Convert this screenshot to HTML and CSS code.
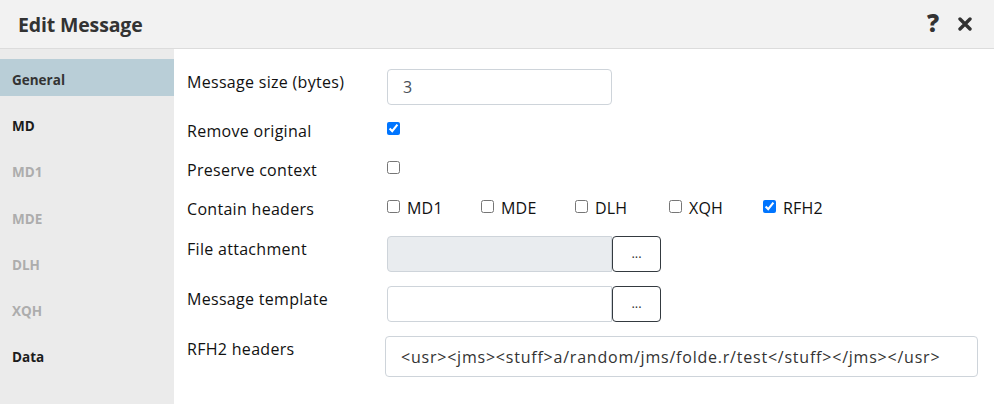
FILE: index.html
```html
<!DOCTYPE html>
<html>
<head>
<meta charset="utf-8">
<link rel="stylesheet" href="styles.css">
</head>
<body>
<div class="dialog">
  <header class="header">
    <h1 class="title">Edit Message</h1>
    <div class="tools">
      <span class="help">?</span>
      <svg class="close" width="14" height="14" viewBox="0 0 14 14"><path d="M2 2 L12 12 M12 2 L2 12" stroke="#333" stroke-width="3.4" stroke-linecap="round"/></svg>
    </div>
  </header>
  <div class="body">
    <nav class="side">
      <div class="item active">General</div>
      <div class="item">MD</div>
      <div class="item dis">MD1</div>
      <div class="item dis">MDE</div>
      <div class="item dis">DLH</div>
      <div class="item dis">XQH</div>
      <div class="item">Data</div>
    </nav>
    <main class="content">
      <div class="row r-input">
        <label class="lbl">Message size (bytes)</label>
        <input class="field size" type="text" value="3">
      </div>
      <div class="row r-check">
        <label class="lbl">Remove original</label>
        <input class="cb" type="checkbox" checked>
      </div>
      <div class="row r-check">
        <label class="lbl">Preserve context</label>
        <input class="cb" type="checkbox">
      </div>
      <div class="row r-check">
        <label class="lbl">Contain headers</label>
        <div class="checks">
          <label class="chk"><input class="cb" type="checkbox">MD1</label>
          <label class="chk"><input class="cb" type="checkbox">MDE</label>
          <label class="chk"><input class="cb" type="checkbox">DLH</label>
          <label class="chk"><input class="cb" type="checkbox">XQH</label>
          <label class="chk"><input class="cb" type="checkbox" checked>RFH2</label>
        </div>
      </div>
      <div class="row r-input">
        <label class="lbl">File attachment</label>
        <div class="group">
          <input class="field size disabled" type="text" disabled>
          <button class="btn">...</button>
        </div>
      </div>
      <div class="row r-input">
        <label class="lbl">Message template</label>
        <div class="group">
          <input class="field size" type="text">
          <button class="btn">...</button>
        </div>
      </div>
      <div class="row r-rfh">
        <label class="lbl">RFH2 headers</label>
        <input class="field wide" type="text" value="<usr><jms><stuff>a/random/jms/folde.r/test</stuff></jms></usr>">
      </div>
    </main>
  </div>
</div>
</body>
</html>
```
FILE: styles.css
```css
* { box-sizing: border-box; }
html, body { margin: 0; padding: 0; }
body {
  width: 994px;
  height: 404px;
  overflow: hidden;
  font-family: "Open Sans", "Noto Sans", sans-serif;
  color: #212529;
  background: #fff;
}
.dialog { display: flex; flex-direction: column; height: 404px; }
.header {
  height: 49px;
  background: #f2f2f2;
  border-bottom: 1px solid #dcdcdc;
  display: flex;
  align-items: center;
  justify-content: space-between;
  padding: 0 22px 0 18px;
  flex-shrink: 0;
}
.title {
  margin: 0;
  font-size: 19.5px;
  font-weight: 700;
  color: #333;
  letter-spacing: -0.15px;
}
.tools { display: flex; align-items: center; gap: 19px; }
.help {
  font-size: 24px;
  font-weight: 800;
  color: #333;
  line-height: 1;
  margin-top: -3px;
}
.close { display: block; }
.body { display: flex; flex: 1; }
.side {
  width: 174px;
  background: #ebebeb;
  padding-top: 10px;
  flex-shrink: 0;
}
.item {
  height: 37px;
  margin-bottom: 9.2px;
  padding: 11px 0 0 12px;
  font-size: 13.5px;
  font-weight: 700;
  line-height: 20px;
  color: #1c1c1c;
}
.item.active { background: #b9ced7; color: #333; }
.item.dis { color: #adadad; }
.content {
  flex: 1;
  padding: 20px 17px 0 13px;
  display: flex;
  flex-direction: column;
  gap: 14px;
}
.row { display: flex; align-items: flex-start; }
.lbl {
  width: 200px;
  flex-shrink: 0;
  font-size: 16px;
  line-height: 24px;
  color: #111;
  letter-spacing: 0.3px;
}
.r-input { height: 36px; }
.r-input .lbl { padding-top: 1px; }
.r-check { height: 25px; }
.r-check .lbl { padding-top: 0; }
.r-rfh { height: 41px; }
.r-rfh .lbl { padding-top: 1px; }
.field {
  height: 36px;
  border: 1px solid #ced4da;
  border-radius: 4px;
  padding: 0 15px;
  font-family: inherit;
  font-size: 16px;
  color: #495057;
  background: #fff;
  outline: none;
}
.field.size { width: 225px; }
.field.disabled { background: #e9ecef; }
.field.wide {
  width: 593px;
  height: 41px;
  margin-left: -2px;
  color: #333;
  letter-spacing: 0.78px;
}
.group { display: flex; }
.group .field { border-top-right-radius: 0; border-bottom-right-radius: 0; }
.btn {
  width: 49px;
  height: 36px;
  margin-left: 0;
  border: 1px solid #343a40;
  border-radius: 4px;
  background: #fff;
  font-family: inherit;
  font-size: 13px;
  color: #333;
  padding: 0 0 2px;
}
.cb {
  width: 13px;
  height: 13px;
  margin: 3px 0 0 0;
  accent-color: #0075ff;
}
.checks { display: flex; }
.chk {
  width: 94px;
  display: flex;
  align-items: flex-start;
  gap: 7px;
  font-size: 16px;
  line-height: 22px;
  color: #111;
  letter-spacing: 0.2px;
}
.chk .cb { margin-top: 3px; }
```
